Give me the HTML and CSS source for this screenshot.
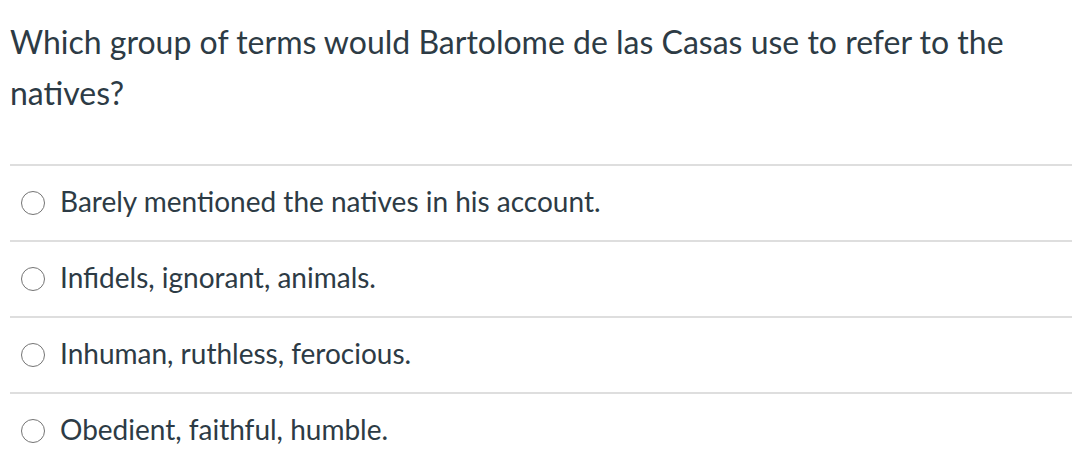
FILE: index.html
```html
<!DOCTYPE html>
<html>
<head>
<meta charset="utf-8">
<link rel="stylesheet" href="styles.css">
</head>
<body>
<div class="quiz">
  <div class="question">Which group of terms would Bartolome de las Casas use to refer to the natives?</div>
  <div class="answers">
    <div class="answer"><span class="radio"></span><span class="label">Barely mentioned the natives in his account.</span></div>
    <div class="answer"><span class="radio"></span><span class="label">Infidels, ignorant, animals.</span></div>
    <div class="answer"><span class="radio"></span><span class="label">Inhuman, ruthless, ferocious.</span></div>
    <div class="answer"><span class="radio"></span><span class="label">Obedient, faithful, humble.</span></div>
  </div>
</div>
</body>
</html>
```
FILE: styles.css
```css
html, body {
  margin: 0;
  padding: 0;
  background: #ffffff;
}
body {
  font-family: Lato, "Open Sans", sans-serif;
  color: #2d3b45;
  overflow: hidden;
}
.quiz {
  padding: 16px 0 0 10px;
}
.question {
  font-size: 32px;
  line-height: 51px;
  max-width: 1010px;
}
.answers {
  margin-top: 46px;
}
.answer {
  display: flex;
  align-items: center;
  height: 74px;
  border-top: 2px solid #dedede;
  padding-left: 11px;
}
.radio {
  width: 22px;
  height: 22px;
  border: 1.7px solid #747474;
  border-radius: 50%;
  flex: none;
  margin-right: 15px;
}
.label {
  font-size: 28px;
  line-height: 34px;
  margin-bottom: 5px;
}
```
